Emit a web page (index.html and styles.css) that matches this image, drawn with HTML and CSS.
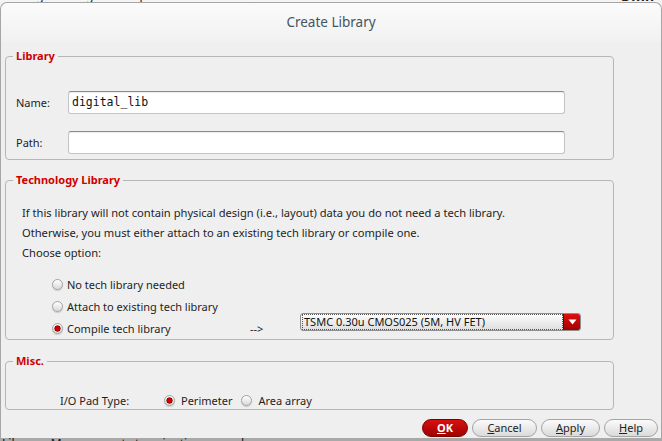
FILE: index.html
```html
<!DOCTYPE html>
<html>
<head>
<meta charset="utf-8">
<title>Create Library</title>
<link rel="stylesheet" href="styles.css">
</head>
<body>
<div class="behind-top"><span class="behind-text">Design Manager &nbsp;&nbsp;&nbsp; Help</span><span class="behind-text right">Dmn</span></div>
<div class="dialog">
  <div class="titlebar">Create Library</div>
  <div class="content">
    <div class="group group-lib">
      <div class="group-title">Library</div>
      <div class="form-row">
        <span class="field-label">Name:</span>
        <div class="input mono">digital_lib</div>
      </div>
      <div class="form-row">
        <span class="field-label">Path:</span>
        <div class="input"></div>
      </div>
    </div>

    <div class="group group-tech">
      <div class="group-title">Technology Library</div>
      <p class="para">If this library will not contain physical design (i.e., layout) data you do not need a tech library.</p>
      <p class="para">Otherwise, you must either attach to an existing tech library or compile one.</p>
      <p class="para">Choose option:</p>
      <div class="radio-list">
        <div class="radio-row"><span class="radio"></span><span class="radio-label">No tech library needed</span></div>
        <div class="radio-row"><span class="radio"></span><span class="radio-label">Attach to existing tech library</span></div>
        <div class="radio-row">
          <div class="radio-cell"><span class="radio checked"></span><span class="radio-label">Compile tech library</span></div>
          <span class="arrow">--&gt;</span>
          <div class="combo">
            <span class="combo-text">TSMC 0.30u CMOS025 (5M, HV FET)</span>
            <span class="combo-btn"><svg width="9" height="6" viewBox="0 0 9 6"><path d="M0.5 0.5 L8.5 0.5 L4.5 5.5 Z" fill="#fff"/></svg></span>
          </div>
        </div>
      </div>
    </div>

    <div class="group group-misc">
      <div class="group-title">Misc.</div>
      <div class="misc-row">
        <span class="misc-label">I/O Pad Type:</span>
        <span class="radio checked"></span><span class="radio-label misc-opt perim">Perimeter</span>
        <span class="radio"></span><span class="radio-label misc-opt">Area array</span>
      </div>
    </div>

    <div class="buttons">
      <button class="btn btn-ok"><u>O</u>K</button>
      <button class="btn btn-cancel"><u>C</u>ancel</button>
      <button class="btn btn-apply"><u>A</u>pply</button>
      <button class="btn btn-help"><u>H</u>elp</button>
    </div>
  </div>
</div>
<div class="behind-bottom"><span class="behind-text2">Library &nbsp; Manager &nbsp;&nbsp; nt &nbsp; terminations &nbsp; used</span></div>
</body>
</html>
```

FILE: styles.css
```css
html, body {
  margin: 0;
  padding: 0;
}
body {
  width: 662px;
  height: 441px;
  overflow: hidden;
  background: #f2f2f2;
  font-family: "Noto Sans", "DejaVu Sans", sans-serif;
  font-size: 11px;
  color: #1e1e1e;
}
.behind-top {
  height: 2px;
  overflow: hidden;
  background: #f4f4f4;
  display: flex;
  justify-content: space-between;
  padding: 0 8px 0 12px;
}
.behind-text {
  display: block;
  font-size: 12px;
  line-height: 12px;
  margin-top: -10px;
  color: #222;
}
.behind-text.right {
  font-weight: bold;
  font-size: 14px;
}
.dialog {
  height: 435px;
  border: 1px solid #a6a6a6;
  border-bottom: none;
  border-radius: 7px 7px 0 0;
  background: #efefef;
  display: flex;
  flex-direction: column;
}
.titlebar {
  height: 39px;
  line-height: 38px;
  text-align: center;
  font-size: 13.5px;
  color: #45545c;
  background: linear-gradient(#fbfbfb, #f1f1f1);
  border-radius: 7px 7px 0 0;
}
.content {
  padding: 14px 0 0 4px;
}
.group {
  box-sizing: border-box;
  position: relative;
  width: 609px;
  border: 1px solid #b6b6b6;
  border-radius: 4px;
}
.group-title {
  position: absolute;
  top: -9px;
  left: 7px;
  padding: 0 3px;
  background: #efefef;
  color: #d00000;
  font-weight: bold;
  font-size: 11px;
  line-height: 16px;
}
.group-lib {
  padding: 34px 0 5px 10px;
  height: 104px;
}
.form-row {
  display: flex;
  align-items: center;
  height: 23px;
}
.form-row + .form-row {
  margin-top: 17px;
}
.field-label {
  width: 52px;
}
.input {
  box-sizing: border-box;
  width: 497px;
  height: 23px;
  background: #fff;
  border: 1px solid #c4c4c4;
  border-top-color: #8a8a8a;
  border-radius: 3px;
  box-shadow: inset 0 1px 1px rgba(0,0,0,0.08);
  padding-left: 3px;
  line-height: 21px;
}
.mono {
  font-family: "DejaVu Sans Mono", monospace;
  font-size: 11.5px;
  color: #111;
}
.group-tech {
  margin-top: 20px;
  padding: 22px 0 0 16px;
  height: 160px;
}
.para {
  margin: 0;
  line-height: 20px;
  font-size: 11.15px;
}
.radio-list {
  margin-top: 10px;
  padding-left: 30px;
}
.radio-row {
  display: flex;
  align-items: center;
  height: 22px;
}
.radio-cell {
  display: flex;
  align-items: center;
  width: 198px;
}
.radio {
  box-sizing: border-box;
  flex: none;
  width: 11px;
  height: 11px;
  border-radius: 50%;
  border: 1px solid #a2a2a2;
  background: linear-gradient(#ffffff, #d9d9d9);
  box-shadow: 0 1px 1px rgba(0,0,0,0.15);
}
.radio.checked {
  background: radial-gradient(circle at 50% 50%, #e40000 0, #c00000 2.2px, #7a0000 2.8px, rgba(0,0,0,0) 3.4px), linear-gradient(#ffffff, #d9d9d9);
}
.radio-label {
  margin-left: 4px;
}
.radio-label.misc-opt {
  margin-left: 6px;
}
.arrow {
  width: 50px;
}
.combo {
  box-sizing: border-box;
  display: flex;
  width: 281px;
  height: 18px;
  margin-bottom: 12px;
  border: 1px solid #8e8e8e;
  border-radius: 3px;
  background: linear-gradient(#fdfdfd, #dedede);
}
.combo-text {
  flex: 1;
  margin: 0 0 0 1px;
  border: 1px dotted #555;
  padding-left: 1px;
  line-height: 14px;
  font-size: 11px;
  color: #111;
}
.combo-btn {
  width: 16px;
  display: flex;
  align-items: center;
  justify-content: center;
  background: linear-gradient(#dc1010, #a40000);
  border-left: 1px solid #7a0000;
  border-radius: 0 2px 2px 0;
}
.group-misc {
  margin-top: 21px;
  padding: 30px 0 0 54px;
  height: 49px;
}
.misc-row {
  display: flex;
  align-items: center;
  height: 17px;
}
.misc-label {
  width: 104px;
}
.radio-label.perim {
  margin-right: 9px;
}
.buttons {
  display: flex;
  justify-content: flex-end;
  gap: 4px;
  margin-top: 9px;
  padding-right: 3px;
}
.btn {
  box-sizing: border-box;
  height: 18px;
  padding: 0;
  border: 1px solid #a4a4a4;
  border-radius: 9px;
  background: linear-gradient(#fbfbfb, #dadada);
  font-family: "Noto Sans", "DejaVu Sans", sans-serif;
  font-size: 11px;
  line-height: 16px;
  color: #222;
}
.btn-ok {
  width: 46px;
  border-color: #7a0000;
  background: linear-gradient(#d81010, #a00000);
  color: #fff;
  font-weight: bold;
}
.btn-cancel { width: 65px; }
.btn-apply { width: 59px; }
.btn-help { width: 54px; }
.behind-bottom {
  height: 4px;
  overflow: hidden;
  background: #a9a9a9;
  padding-left: 2px;
}
.behind-text2 {
  display: block;
  font-size: 12px;
  line-height: 12px;
  color: #111;
}
```
